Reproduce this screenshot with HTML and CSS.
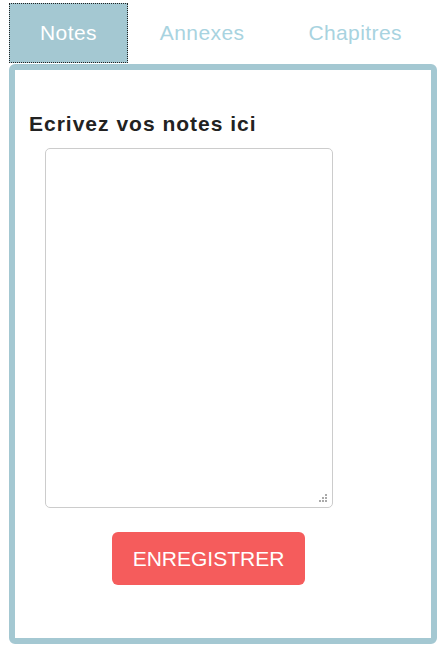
FILE: index.html
```html
<!DOCTYPE html>
<html lang="fr">
<head>
  <meta charset="UTF-8">
  <meta name="viewport" content="width=device-width, initial-scale=1.0">
  <title>Notes</title>
  <link rel="stylesheet" href="styles.css">
</head>
<body>
  <div class="tabs">
    <a class="tab active" href="#">Notes</a>
    <a class="tab" href="#">Annexes</a>
    <a class="tab" href="#">Chapitres</a>
  </div>
  <div class="panel">
    <form class="notesForm">
      <label for="notes">Ecrivez vos notes ici</label>
      <div class="areaWrap">
        <textarea id="notes"></textarea>
        <svg class="grip" width="10" height="10" viewBox="0 0 10 10">
          <rect x="7" y="1" width="2" height="2"/>
          <rect x="4" y="4" width="2" height="2"/>
          <rect x="7" y="4" width="2" height="2"/>
          <rect x="1" y="7" width="2" height="2"/>
          <rect x="4" y="7" width="2" height="2"/>
          <rect x="7" y="7" width="2" height="2"/>
        </svg>
      </div>
      <button type="button" class="save">ENREGISTRER</button>
    </form>
  </div>
</body>
</html>
```

FILE: styles.css
```css
body {
  margin: 0;
  padding: 3px 8px 0 9px;
  font-family: "Liberation Sans", Arial, sans-serif;
  background: #fff;
}

.tabs {
  display: flex;
  height: 61px;
}
.tab {
  display: block;
  padding: 18px 32px 0 32px;
  font-size: 21px;
  line-height: 24px;
  letter-spacing: 0.4px;
  color: #a8d3e0;
  text-decoration: none;
}
.tab.active {
  padding: 18px 31px 0 31px;
  background-color: #a4c8d2;
  color: #fff;
  outline: 1px dotted #222;
  outline-offset: -1px;
  height: 42px;
}

.panel {
  border: 6px solid #a4c8d2;
  border-radius: 6px;
  height: 568px;
  box-sizing: content-box;
}

.notesForm {
  display: flex;
  flex-direction: column;
  align-items: flex-start;
  padding: 42px 0 0 14px;
}
label {
  font-size: 21px;
  font-weight: bold;
  line-height: 24px;
  letter-spacing: 1px;
  color: #222;
}
.areaWrap {
  position: relative;
  margin: 12px 0 0 16px;
}
textarea {
  display: block;
  width: 288px;
  height: 360px;
  box-sizing: border-box;
  border: 1px solid #ccc;
  border-radius: 5px;
  resize: none;
  font-family: inherit;
}
.grip {
  position: absolute;
  right: 5px;
  bottom: 5px;
  fill: #aaa;
}
.save {
  margin: 24px 0 0 83px;
  width: 193px;
  height: 53px;
  border: none;
  border-radius: 6px;
  background-color: #f55c5c;
  color: #fff;
  font-family: inherit;
  font-size: 21px;
  cursor: pointer;
}
```
